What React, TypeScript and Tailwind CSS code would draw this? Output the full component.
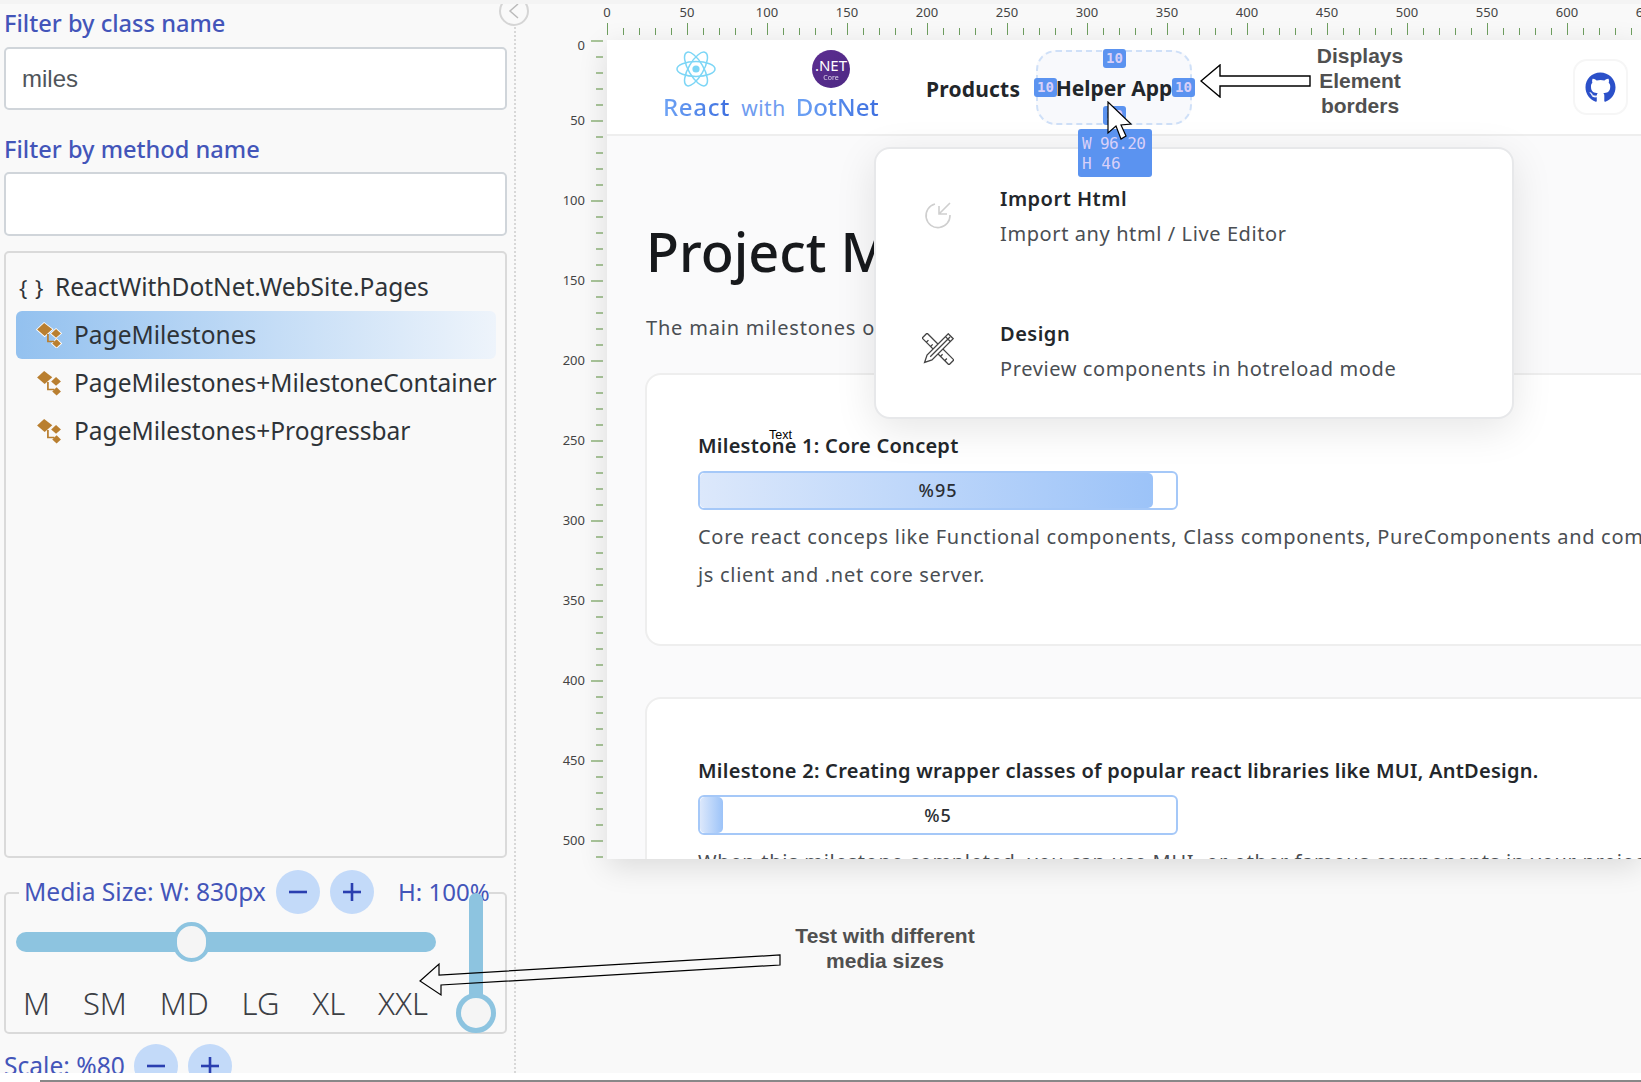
import { FaGithub } from "react-icons/fa";

const hLabels = Array.from({ length: 14 }, (_, i) => i * 50);
const hTicks = Array.from({ length: 66 }, (_, i) => i);
const vTicks = Array.from({ length: 52 }, (_, i) => i);
const mediaSizes = ["M", "SM", "MD", "LG", "XL", "XXL"];

function ClassIcon({ selected = false }: { selected?: boolean }) {
  const outline = selected ? { stroke: "#fff", strokeWidth: 1.6, paintOrder: "stroke" as const } : {};
  return (
    <svg width="26" height="26" viewBox="0 0 24 24" className="shrink-0">
      <g fill="#b97f30" {...outline}>
        <path d="M7.5 1 L15 6.8 L8 13 L1 7 Z" />
        <path d="M18.5 6.5 L23 10.5 L18.5 14.5 L14 10.5 Z" />
        <path d="M19 16 L23 19.8 L19 23.5 L15 19.8 Z" />
      </g>
      <path d="M11 11 V18 H17" fill="none" stroke="#b97f30" strokeWidth="1.6" />
    </svg>
  );
}

function ReactLogo() {
  return (
    <svg width="40" height="36" viewBox="-20 -18 40 36" fill="none" stroke="#7dd6f6" strokeWidth="1.5">
      <circle r="3.6" fill="#7dd6f6" stroke="none" />
      <ellipse rx="19" ry="7.4" />
      <ellipse rx="19" ry="7.4" transform="rotate(60)" />
      <ellipse rx="19" ry="7.4" transform="rotate(120)" />
    </svg>
  );
}

function RoundButton({ sign }: { sign: string }) {
  return (
    <button className="w-[44px] h-[44px] shrink-0 rounded-full bg-[#c3daf9] flex items-center justify-center text-[#2a3fb0]">
      <svg width="20" height="20" viewBox="0 0 20 20" stroke="currentColor" strokeWidth="2.6">
        <path d="M1 10 H19" />
        {sign === "+" && <path d="M10 1 V19" />}
      </svg>
    </button>
  );
}

function Progress({ value, fill, h }: { value: number; fill: number; h: string }) {
  return (
    <div className={`relative w-[480px] ${h} rounded-[6px] border-2 border-[#a5c8f8] bg-white flex items-center justify-center overflow-hidden`}>
      <div
        className="absolute left-0 top-0 bottom-0 rounded-[5px] bg-gradient-to-r from-[#dce8fb] to-[#9cc3f8]"
        style={{ width: fill }}
      />
      <span className="relative text-[18px] tracking-[1px] font-medium text-[#2a2e33]">%{value}</span>
    </div>
  );
}

function MenuItem({ icon, title, text, top }: { icon: React.ReactNode; title: string; text: string; top: string }) {
  return (
    <div className={`flex ${top}`}>
      <div className="w-[124px] flex justify-center pt-[13px]">{icon}</div>
      <div>
        <div className="text-[20px] leading-[28px] font-semibold tracking-[0.5px] text-[#23272b]">{title}</div>
        <div className="mt-[7px] text-[20px] leading-[28px] tracking-[0.6px] text-[#4a4e53]">{text}</div>
      </div>
    </div>
  );
}

const badge = "absolute w-[23px] h-[19px] rounded-[3px] bg-[#5b93f0] text-[#d8d0f8] text-[14px] leading-[19px] text-center";
const mono = { fontFamily: '"DejaVu Sans Mono", monospace' };
const arial = { fontFamily: '"Liberation Sans", sans-serif' };

export default function App() {
  return (
    <div className="w-[1641px] h-[1082px] overflow-hidden bg-white flex flex-col relative" style={{ fontFamily: '"Noto Sans", sans-serif' }}>
      <div className="h-1 shrink-0 bg-[#f4f4f4]" />
      <div className="h-[1069px] shrink-0 flex bg-[#f9f9f9] overflow-hidden relative">
        {/* left panel */}
        <div className="w-[516px] shrink-0 pl-[4px] pr-[7px] relative border-r-2 border-dotted border-[#d8d8d8]">
          <div className="absolute right-[-15px] top-[-8px] z-10 w-[30px] h-[30px] rounded-full border-2 border-[#d5d5d5] bg-[#f9f9f9] flex items-center justify-center">
            <svg width="12" height="16" viewBox="0 0 12 16" fill="none" stroke="#bbb" strokeWidth="1.5"><path d="M10 1 L2 8 L10 15" /></svg>
          </div>
          <div className="h-[38px] pt-[2px] flex items-center text-[23.6px] font-medium text-[#4355b9]">Filter by class name</div>
          <div className="mt-[5px] h-[63px] rounded-[5px] border-2 border-[#d0d5da] bg-white flex items-center pl-[16px] text-[24px] text-[#50555a]" style={arial}>
            miles
          </div>
          <div className="mt-[20px] h-[38px] pt-[2px] flex items-center text-[23.6px] font-medium text-[#4355b9]">Filter by method name</div>
          <div className="mt-[4px] h-[64px] rounded-[5px] border-2 border-[#d0d5da] bg-white" />

          <div className="mt-[15px] h-[607px] rounded-[5px] border-2 border-[#dadada] pt-[10px] pl-[10px] pr-[9px] text-[24.5px] text-[#2e3338]">
            <div className="h-[48px] flex items-center">
              <span className="w-[39px] pl-[3px] tracking-[1px] text-[22px]">{"{ }"}</span>
              <span>ReactWithDotNet.WebSite.Pages</span>
            </div>
            <div className="h-[48px] flex items-center gap-[12px] pl-[20px] rounded-[6px] bg-gradient-to-r from-[#93c1ef] to-[#eef4fb]">
              <ClassIcon selected />
              <span>PageMilestones</span>
            </div>
            <div className="h-[48px] flex items-center gap-[12px] pl-[20px] whitespace-nowrap">
              <ClassIcon />
              <span>PageMilestones+MilestoneContainer</span>
            </div>
            <div className="h-[48px] flex items-center gap-[12px] pl-[20px]">
              <ClassIcon />
              <span>PageMilestones+Progressbar</span>
            </div>
          </div>

          <div className="mt-[34px] h-[142px] rounded-[5px] border-2 border-[#dadada] relative">
            <div className="-mt-[24px] h-[44px] ml-[13px] mr-[16px] pl-[5px] bg-[#f9f9f9] flex items-center text-[24.6px] text-[#4355b9]">
              <span className="w-[252px] shrink-0 whitespace-nowrap">Media Size: W: 830px</span>
              <RoundButton sign="-" />
              <span className="w-[10px] shrink-0" />
              <RoundButton sign="+" />
              <span className="ml-[24px] text-[24px] whitespace-nowrap">H: 100%</span>
            </div>
            <div className="mt-[18px] ml-[10px] w-[420px] h-[20px] rounded-full bg-[#8dc4e0] relative">
              <div className="absolute left-[157px] top-[-10px] w-[37px] h-[40px] rounded-full border-[4px] border-[#8dc4e0] bg-[#f5f5f5]" />
            </div>
            <div className="mt-[31px] ml-[17px] w-[405px] flex justify-between text-[31px] leading-[40px] font-light text-[#3c4045]">
              {mediaSizes.map((m) => (
                <span key={m}>{m}</span>
              ))}
            </div>
            <div className="absolute left-[463px] top-[-1px] w-[14px] h-[125px] bg-[#8dc4e0] rounded-t-full" />
            <div className="absolute left-[450px] top-[99px] w-[40px] h-[40px] rounded-full border-[5px] border-[#8dc4e0] bg-[#f5f5f5]" />
          </div>

          <div className="mt-[10px] h-[44px] flex items-center text-[24.6px] text-[#4355b9]">
            <span className="w-[130px] shrink-0 whitespace-nowrap">Scale: %80</span>
            <RoundButton sign="-" />
            <span className="w-[10px] shrink-0" />
            <RoundButton sign="+" />
          </div>
        </div>

        {/* right side */}
        <div className="flex-1 min-w-0 flex flex-col">
          {/* horizontal ruler */}
          <div className="h-[36px] shrink-0 pl-[91px] overflow-hidden">
            <div className="flex h-[14px] mb-[5px] items-center">
              {hLabels.map((n) => (
                <div key={n} className="w-[80px] shrink-0">
                  <span className="inline-block -translate-x-1/2 text-[13px] text-[#444]">{n}</span>
                </div>
              ))}
            </div>
            <div className="flex items-end h-[12px]">
              {hTicks.map((i) => (
                <div key={i} className="w-[16px] shrink-0">
                  <div className={`w-px bg-[#6f9f60] ${i % 5 === 0 ? "h-[12px]" : "h-[7px]"}`} />
                </div>
              ))}
            </div>
          </div>

          <div className="flex min-h-0 h-[819px]">
            {/* vertical ruler */}
            <div className="w-[91px] shrink-0 overflow-hidden pr-[4px]">
              {vTicks.map((i) => (
                <div key={i} className="h-[16px] flex justify-end">
                  {i % 5 === 0 && (
                    <span className={`mr-[6px] text-[13px] leading-[14px] text-[#444] ${i === 0 ? "translate-y-[-2px]" : "-mt-[7px]"}`}>
                      {i * 10}
                    </span>
                  )}
                  <div className={`h-[2px] bg-[#a9c59a] ${i % 5 === 0 ? "w-[12px]" : "w-[7px]"}`} />
                </div>
              ))}
            </div>

            {/* preview */}
            <div className="flex-1 min-w-0 bg-[#fafafb] relative shadow-[0_8px_28px_rgba(0,0,0,0.12)] overflow-hidden">
              <div className="h-[96px] bg-white border-b-2 border-[#eeeeee] flex items-center pl-[56px] pr-[13px]">
                <div className="w-[214px] shrink-0 self-start pt-[11px] relative h-full">
                  <div className="flex h-[36px]">
                    <div className="ml-[13px]"><ReactLogo /></div>
                    <div className="ml-[96px] -mt-[1px] w-[38px] h-[38px] rounded-full bg-gradient-to-br from-[#5c2d91] to-[#4e2a84] flex flex-col items-center justify-center text-white">
                      <span className="text-[15px] leading-[15px] mt-[2px]">.NET</span>
                      <span className="text-[7px] leading-[9px] opacity-80">Core</span>
                    </div>
                  </div>
                  <div className="mt-[5px] flex items-baseline text-[24px] leading-[30px] whitespace-nowrap">
                    <span className="bg-gradient-to-r from-[#6ea3f5] to-[#3e6fe0] bg-clip-text text-transparent font-medium tracking-[0.7px]">React</span>
                    <span className="ml-[11px] text-[21px] tracking-[0.5px] text-[#6f9cf0]">with</span>
                    <span className="ml-[10px] bg-gradient-to-r from-[#6ea3f5] to-[#3e6fe0] bg-clip-text text-transparent font-medium">DotNet</span>
                  </div>
                </div>
                <div className="ml-[49px] pt-[5px] w-[110px] shrink-0 text-[21px] font-bold tracking-[0.2px] text-[#22262a]">Products</div>
                <div className="relative mt-[1px] w-[156px] h-[75px] shrink-0 rounded-[20px] border-2 border-dashed border-[#cfe0f8] bg-[#f8f9fc] flex items-center justify-center pt-[2px] text-[21px] font-bold text-[#22262a] whitespace-nowrap">
                  Helper App
                  <div className={`${badge} left-[65px] top-[-3px]`} style={mono}>10</div>
                  <div className={`${badge} left-[-4px] top-[26px]`} style={mono}>10</div>
                  <div className={`${badge} left-[134px] top-[26px]`} style={mono}>10</div>
                  <div className={`${badge} left-[65px] top-[54px]`} style={mono}>10</div>
                </div>
                <div className="ml-auto w-[55px] h-[56px] rounded-[14px] border-2 border-[#f6f6f6] flex items-center justify-center text-[#2b50c9]">
                  <FaGithub size={31} />
                </div>
              </div>

              <div className="pl-[38px]">
                <h1 className="pl-[1px] pt-[85px] h-[145px] text-[54px] leading-[60px] font-medium text-[#17191c] whitespace-nowrap">Project Milestones</h1>
                <p className="pl-[1px] mt-[28px] h-[38px] text-[20px] leading-[38px] tracking-[0.8px] text-[#4a4e53] whitespace-nowrap">The main milestones of the project</p>

                <div className="mt-[26px] w-[1100px] h-[273px] rounded-[16px] border-2 border-[#eeeeee] bg-white pl-[51px] pt-[57px]">
                  <div className="h-[28px] text-[20px] leading-[28px] font-semibold tracking-[0.25px] text-[#23272b]">Milestone 1: Core Concept</div>
                  <div className="mt-[11px]"><Progress value={95} fill={453} h="h-[39px]" /></div>
                  <p className="mt-[8px] text-[20px] leading-[38px] tracking-[0.7px] text-[#4a4e53] whitespace-nowrap">
                    Core react conceps like Functional components, Class components, PureComponents and communication between
                    <br />
                    js client and .net core server.
                  </p>
                </div>

                <div className="mt-[51px] w-[1100px] h-[272px] rounded-[16px] border-2 border-[#eeeeee] bg-white pl-[51px] pt-[58px]">
                  <div className="h-[28px] text-[20px] leading-[28px] font-semibold tracking-[0.26px] text-[#23272b] whitespace-nowrap">Milestone 2: Creating wrapper classes of popular react libraries like MUI, AntDesign.</div>
                  <div className="mt-[10px]"><Progress value={5} fill={23} h="h-[40px]" /></div>
                  <p className="mt-[8px] text-[20px] leading-[38px] tracking-[0.7px] text-[#4a4e53] whitespace-nowrap">
                    When this milestone completed, you can use MUI, or other famous components in your project
                  </p>
                </div>
              </div>
            </div>
          </div>
        </div>
      </div>
      <div className="h-[7px] shrink-0 bg-white" />
      <div className="h-[2px] ml-[40px] shrink-0 bg-[#888]" />

      {/* dropdown menu over the preview */}
      <div className="absolute left-[874px] top-[147px] w-[640px] h-[272px] rounded-[16px] border-2 border-[#e7e8ea] bg-white shadow-[0_10px_40px_rgba(0,0,0,0.1)] pt-[36px]">
        <MenuItem
          top=""
          title="Import Html"
          text="Import any html / Live Editor"
          icon={
            <svg className="mt-[3px]" width="28" height="28" viewBox="0 0 28 28" fill="none" stroke="#cfcfcf" strokeWidth="1.6">
              <path d="M11 3 A12 12 0 1 0 26 14" />
              <path d="M26 2 L15 13 M15 5 V13 H23" />
            </svg>
          }
        />
        <MenuItem
          top="mt-[72px]"
          title="Design"
          text="Preview components in hotreload mode"
          icon={
            <svg width="32" height="32" viewBox="0 0 32 32" fill="none" stroke="#444" strokeWidth="1.3">
              <g transform="rotate(-45 16 16)">
                <rect x="12.5" y="-3" width="7" height="38" rx="0.5" fill="#fff" />
                <path d="M12.5 3 H15.5 M12.5 9 H15.5 M12.5 23 H15.5 M12.5 29 H15.5" />
              </g>
              <g transform="rotate(45 16 16)">
                <path d="M12.5 -2 H19.5 V28 L16 35 L12.5 28 Z" fill="#fff" />
                <path d="M16 -1 V27 M12.5 2 H19.5" />
              </g>
            </svg>
          }
        />
      </div>

      {/* size readout and pointer */}
      <div className="absolute left-[1078px] top-[129px] w-[74px] h-[48px] rounded-[3px] bg-[#5b93f0] pl-[4px] pt-[5px] text-[#d8d0f8] text-[16px] leading-[20px]" style={mono}>
        <div className="whitespace-nowrap tracking-[-0.6px]">W 96.20</div>
        <div>H 46</div>
      </div>
      <svg className="absolute left-[1106px] top-[101px]" width="28" height="40" viewBox="0 0 28 40">
        <path d="M2 1 L2 32 L10 25 L15 38 L20 35 L15 24 L25 23 Z" fill="#fff" stroke="#000" strokeWidth="1.2" />
      </svg>

      {/* "Text" marker */}
      <div className="absolute left-[769px] top-[428px] text-[12.5px] leading-[14px] text-black" style={arial}>Text</div>

      {/* annotations */}
      <svg className="absolute left-[1200px] top-[64px]" width="112" height="34" viewBox="0 0 112 34" fill="#fff" stroke="#000" strokeWidth="1.4">
        <path d="M1 17 L20 1 V12 H110 V22 H20 V33 Z" />
      </svg>
      <div className="absolute left-[1300px] top-[43px] w-[120px] text-center text-[21px] leading-[25px] font-bold text-[#505050]" style={arial}>
        Displays
        <br />
        Element
        <br />
        borders
      </div>
      <svg className="absolute left-[418px] top-[950px]" width="366" height="50" viewBox="0 0 366 50" fill="none" stroke="#000" strokeWidth="1.2">
        <path d="M2 31 L21 14 L21 25 L362 5 L362 15 L23 35 L23 45 Z" />
      </svg>
      <div className="absolute left-[780px] top-[923px] w-[210px] text-center text-[21px] leading-[25px] font-bold text-[#505050]" style={arial}>
        Test with different
        <br />
        media sizes
      </div>
    </div>
  );
}
